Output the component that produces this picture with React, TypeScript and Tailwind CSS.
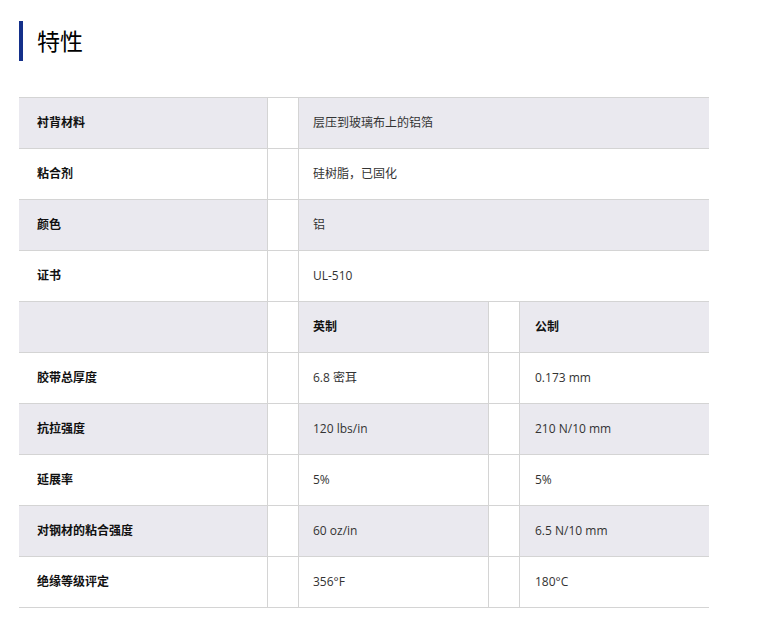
const font = { fontFamily: '"Open Sans", "Noto Sans CJK SC", sans-serif' }

type Row = { label: string; a?: string; b?: string; bold?: boolean; span?: boolean }

const rows: Row[] = [
  { label: '衬背材料', a: '层压到玻璃布上的铝箔', span: true },
  { label: '粘合剂', a: '硅树脂，已固化', span: true },
  { label: '颜色', a: '铝', span: true },
  { label: '证书', a: 'UL-510', span: true },
  { label: '', a: '英制', b: '公制', bold: true },
  { label: '胶带总厚度', a: '6.8 密耳', b: '0.173 mm' },
  { label: '抗拉强度', a: '120 lbs/in', b: '210 N/10 mm' },
  { label: '延展率', a: '5%', b: '5%' },
  { label: '对钢材的粘合强度', a: '60 oz/in', b: '6.5 N/10 mm' },
  { label: '绝缘等级评定', a: '356°F', b: '180°C' },
]

const App = () => {
  return (
    <div className="min-h-[627px] w-[760px] bg-white pt-[21px] pl-[19px]" style={font}>
      <div className="flex h-[40px] items-center">
        <div className="h-[40px] w-[4px] bg-[#14308a]" />
        <h2 className="ml-[14px] text-[23px] font-normal leading-none text-black">特性</h2>
      </div>

      <div className="mt-[36px] w-[690px] border-t border-[#d4d4d4]">
        {rows.map((row, i) => {
          const bg = i % 2 === 0 ? 'bg-[#eae9ef]' : 'bg-white'
          const valueCls = row.bold ? 'font-bold text-[#111]' : 'text-[#333]'
          return (
            <div key={i} className="flex h-[51px] border-b border-[#d4d4d4] text-[12px]">
              <div className={`flex w-[248px] items-center pb-px pl-[18px] font-bold text-[#111] ${bg}`}>
                {row.label}
              </div>
              <div className="w-[32px] border-x border-[#d4d4d4] bg-white" />
              {row.span ? (
                <div className={`flex flex-1 items-center pb-px pl-[14px] ${valueCls} ${bg}`}>{row.a}</div>
              ) : (
                <>
                  <div className={`flex w-[189px] items-center pb-px pl-[14px] ${valueCls} ${bg}`}>{row.a}</div>
                  <div className="w-[32px] border-x border-[#d4d4d4] bg-white" />
                  <div className={`flex flex-1 items-center pb-px pl-[15px] ${valueCls} ${bg}`}>{row.b}</div>
                </>
              )}
            </div>
          )
        })}
      </div>
    </div>
  )
}

export default App
